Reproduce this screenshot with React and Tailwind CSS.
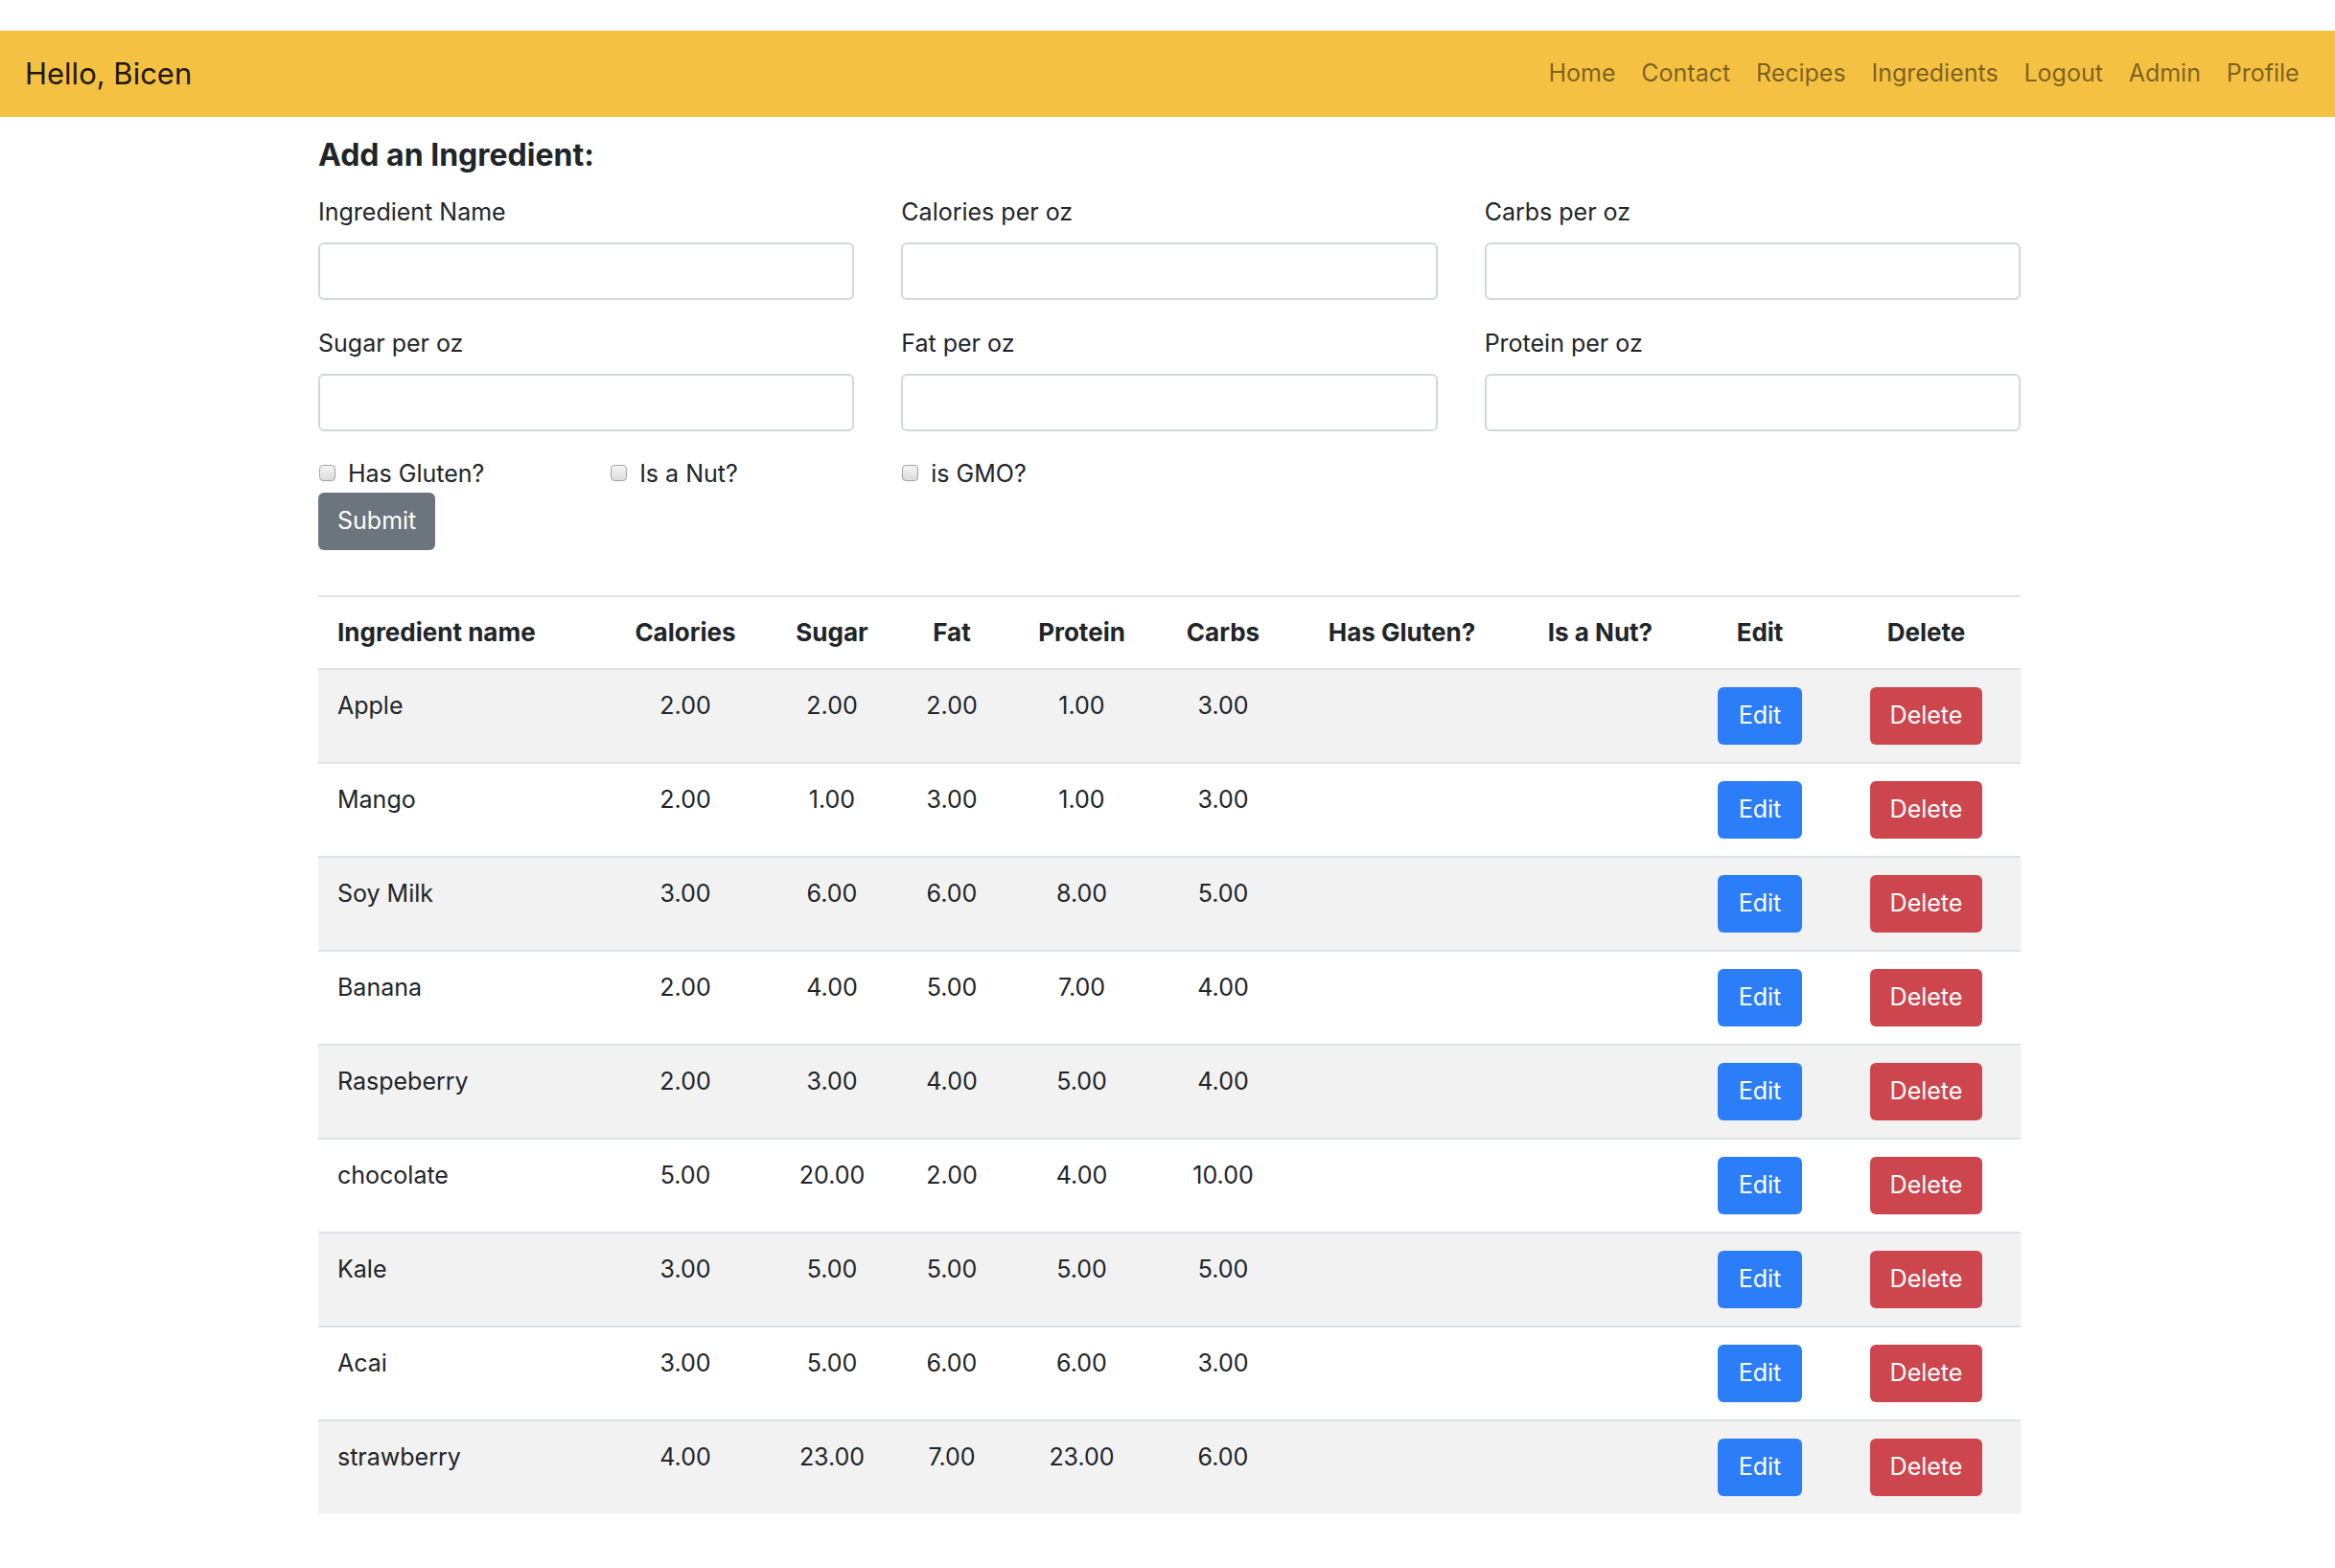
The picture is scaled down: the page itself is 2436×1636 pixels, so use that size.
import React from "react";

const links = ["Home", "Contact", "Recipes", "Ingredients", "Logout", "Admin", "Profile"];

const rows = [
  ["Apple", "2.00", "2.00", "2.00", "1.00", "3.00"],
  ["Mango", "2.00", "1.00", "3.00", "1.00", "3.00"],
  ["Soy Milk", "3.00", "6.00", "6.00", "8.00", "5.00"],
  ["Banana", "2.00", "4.00", "5.00", "7.00", "4.00"],
  ["Raspeberry", "2.00", "3.00", "4.00", "5.00", "4.00"],
  ["chocolate", "5.00", "20.00", "2.00", "4.00", "10.00"],
  ["Kale", "3.00", "5.00", "5.00", "5.00", "5.00"],
  ["Acai", "3.00", "5.00", "6.00", "6.00", "3.00"],
  ["strawberry", "4.00", "23.00", "7.00", "23.00", "6.00"],
];

const colWidths = [296, 174, 132, 118, 153, 142, 231, 183, 150, 197];
const headers = ["Ingredient name", "Calories", "Sugar", "Fat", "Protein", "Carbs", "Has Gluten?", "Is a Nut?", "Edit", "Delete"];

function Field({ label }) {
  return (
    <div className="flex flex-col">
      <label className="text-[25px] leading-[37.5px] mb-[12.5px]">{label}</label>
      <div className="h-[60px] rounded-[6px] border-2 border-[#d3d7db] bg-white" />
    </div>
  );
}

function Check({ label }) {
  return (
    <div className="flex items-center gap-[13px] h-[37.5px]">
      <span className="ml-[1px] w-[17px] h-[17px] rounded-[4px] border border-[#a3a3a3] bg-gradient-to-b from-[#f4f4f4] to-[#dcdcdc] -mt-[3px]" />
      <span className="text-[25px] leading-[37.5px]">{label}</span>
    </div>
  );
}

export default function App() {
  return (
    <div className="min-h-[1636px] bg-white text-[#212529] font-['Inter',sans-serif]">
      <div className="h-[32px]" />
      <nav className="h-[90px] bg-[#f5c142] flex items-center justify-between pl-[26px] pr-[24px]">
        <span className="text-[31px] leading-[46px] text-black/90">Hello, Bicen</span>
        <ul className="flex items-center">
          {links.map((l) => (
            <li key={l} className="px-[13.4px] text-[25px] leading-[37.5px] text-black/50">
              {l}
            </li>
          ))}
        </ul>
      </nav>

      <main className="w-[1780px] mx-auto pl-[4px]">
        <h5 className="mt-[21px] text-[32px] leading-[37.5px] font-bold">Add an Ingredient:</h5>

        <div className="mt-[22.5px] grid grid-cols-3 gap-x-[49px] gap-y-[27px]">
          <Field label="Ingredient Name" />
          <Field label="Calories per oz" />
          <Field label="Carbs per oz" />
          <Field label="Sugar per oz" />
          <Field label="Fat per oz" />
          <Field label="Protein per oz" />
        </div>

        <div className="mt-[26px] grid grid-cols-6 gap-x-[48.75px]">
          <Check label="Has Gluten?" />
          <Check label="Is a Nut?" />
          <Check label="is GMO?" />
        </div>

        <button className="h-[60px] px-[20px] rounded-[6px] bg-[#6c757d] text-white text-[25px] leading-[37.5px]">
          Submit
        </button>

        <table className="mt-[47.5px] w-full table-fixed border-collapse">
          <colgroup>
            {colWidths.map((w, i) => (
              <col key={i} style={{ width: w }} />
            ))}
          </colgroup>
          <thead>
            <tr className="border-t-2 border-[#dee2e6]">
              {headers.map((h, i) => (
                <th
                  key={h}
                  className={
                    "py-[18px] text-[26px] leading-[37.5px] font-bold align-bottom whitespace-nowrap " +
                    (i === 0 ? "text-left pl-[20px] pr-[18px]" : "text-center px-[10px]")
                  }
                >
                  {h}
                </th>
              ))}
            </tr>
          </thead>
          <tbody>
            {rows.map((r, idx) => (
              <tr
                key={r[0]}
                className={"border-t-2 border-[#dee2e6] " + (idx % 2 === 0 ? "bg-[#f2f2f2]" : "bg-white")}
              >
                <td className="pt-[19px] pb-[17px] pl-[20px] pr-[18px] text-[25px] leading-[37.5px] align-top text-left">{r[0]}</td>
                {r.slice(1).map((v, j) => (
                  <td key={j} className="pt-[19px] pb-[17px] px-[10px] text-[25px] leading-[37.5px] align-top text-center">
                    {v}
                  </td>
                ))}
                <td className="py-[18px] px-[10px] align-top" />
                <td className="py-[18px] px-[10px] align-top" />
                <td className="py-[18px] px-[5px] align-top text-center">
                  <button className="inline-block align-top h-[60px] px-[21.5px] rounded-[6px] bg-[#2b7ef7] text-white text-[25px] leading-[37.5px]">
                    Edit
                  </button>
                </td>
                <td className="py-[18px] px-[5px] align-top text-center">
                  <button className="inline-block align-top h-[60px] px-[21px] rounded-[6px] bg-[#cd454d] text-white text-[25px] leading-[37.5px]">
                    Delete
                  </button>
                </td>
              </tr>
            ))}
          </tbody>
        </table>
      </main>
    </div>
  );
}
